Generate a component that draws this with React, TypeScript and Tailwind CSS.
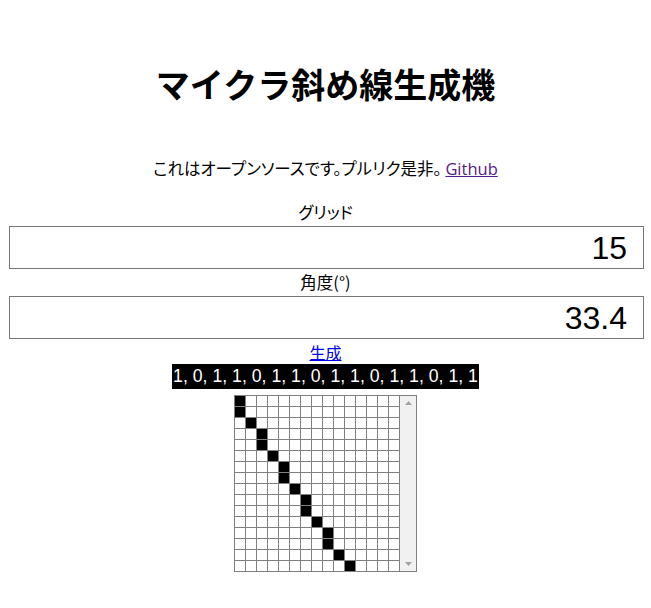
import React from "react"

const cols = [0, 0, 1, 2, 2, 3, 4, 4, 5, 6, 6, 7, 8, 8, 9, 10]
const bits = [1, 0, 1, 1, 0, 1, 1, 0, 1, 1, 0, 1, 1, 0, 1, 1]

function Field({ label, value }: { label: string; value: string }) {
  return (
    <div className="flex flex-col">
      <label className="text-center text-[16.5px] leading-[27px] text-black [font-feature-settings:'palt']">{label}</label>
      <div className="ml-[9px] w-[635px] h-[43px] border border-[#767676] bg-white flex items-center justify-end pr-[16px] font-['Liberation_Sans',sans-serif] text-[32px] text-black">
        {value}
      </div>
    </div>
  )
}

export default function App() {
  return (
    <div className="min-h-[608px] bg-white font-['Noto_Sans_CJK_JP',sans-serif] text-black">

      <h1 className="pt-[64px] text-center text-[34px] leading-[40px] font-bold">
        マイクラ斜め線生成機
      </h1>

      <p className="mt-[52px] text-center text-[16.5px] leading-[24px] [font-feature-settings:'palt']">
        これはオープンソースです。プルリク是非。{" "}
        <a href="#" className="text-[#551a8b] underline font-['Open_Sans',sans-serif] text-[16.5px]">Github</a>
      </p>

      <div className="mt-[18px] flex flex-col">
        <Field label="グリッド" value="15" />
        <Field label="角度(°)" value="33.4" />
      </div>

      <div className="mt-[1px] flex flex-col items-center">
        <a href="#" className="text-[16px] leading-6 text-[#0000ee] underline">生成</a>

        <div className="bg-black text-white font-['Liberation_Sans',sans-serif] text-[17.7px] leading-[25px] px-px">
          {bits.join(", ")}
        </div>

        <div className="mt-[6px] border border-[#808080] h-[177px] flex overflow-hidden">
          <div className="grid grid-cols-[repeat(15,10px)] auto-rows-[10px] gap-px bg-[#808080] pr-px self-start">
            {cols.flatMap((c, r) =>
              Array.from({ length: 15 }, (_, i) => (
                <div key={r + "-" + i} className={i === c ? "bg-black" : "bg-white"} />
              ))
            )}
          </div>
          {/* disabled scrollbar */}
          <div className="w-[16px] bg-[#f1f1f1] flex flex-col items-center justify-between py-[5px]">
            <svg width="7" height="4" viewBox="0 0 7 4"><path d="M3.5 0L7 4H0z" fill="#a3a3a3" /></svg>
            <svg width="7" height="4" viewBox="0 0 7 4"><path d="M0 0h7L3.5 4z" fill="#a3a3a3" /></svg>
          </div>
        </div>
      </div>

    </div>
  )
}
